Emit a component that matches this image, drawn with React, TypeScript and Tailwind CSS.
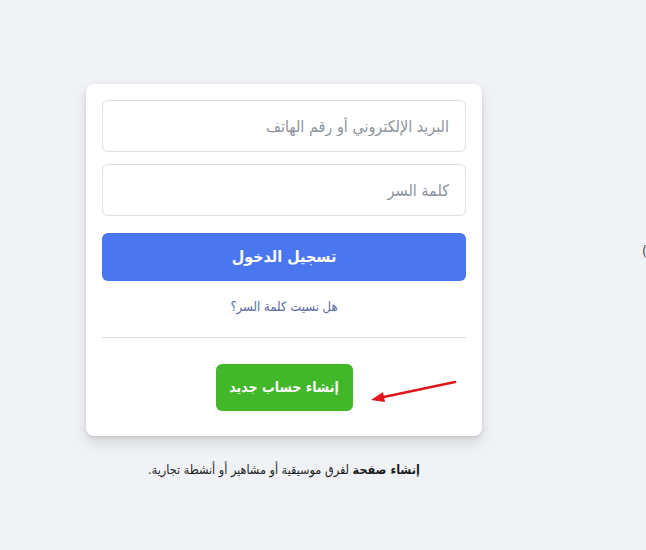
export default function App() {
  return (
    <div
      dir="ltr"
      className="min-h-[550px] w-full bg-[#f0f2f5] pt-[84px]"
      style={{ fontFamily: '"DejaVu Sans Condensed", "DejaVu Sans", sans-serif' }}
    >
      <div className="flex">
        <div className="ml-[86px] w-[396px]">
          <div className="relative rounded-lg bg-white px-4 pt-4 pb-[25px] shadow-[0_2px_4px_rgba(0,0,0,0.1),0_8px_16px_rgba(0,0,0,0.1)]">
            <form dir="rtl" className="flex flex-col">
              <input
                type="text"
                placeholder="البريد الإلكتروني أو رقم الهاتف"
                className="h-[52px] w-full rounded-md border border-[#dddfe2] px-4 text-[16px] text-[#1d2129] placeholder:text-[#8d949e] focus:outline-none"
              />
              <input
                type="password"
                placeholder="كلمة السر"
                className="mt-3 h-[52px] w-full rounded-md border border-[#dddfe2] px-4 text-[16px] text-[#1d2129] placeholder:text-[#8d949e] focus:outline-none"
              />
              <button
                type="button"
                className="mt-[17px] h-12 w-full rounded-md bg-[#4a76ef] text-[16px] font-bold text-white"
              >
                تسجيل الدخول
              </button>
              <a className="mt-4 block text-center text-[13px] text-[#5a6c9f]">هل نسيت كلمة السر؟</a>
              <div className="mt-5 border-t border-[#dadde1]" />
              <div className="flex justify-center pt-[26px]">
                <button
                  type="button"
                  className="h-[47px] w-[137px] rounded-md bg-[#42b72a] text-[14px] font-bold text-white"
                >
                  إنشاء حساب جديد
                </button>
              </div>
            </form>
            <svg
              className="absolute left-[283px] top-[294px]"
              width="90"
              height="26"
              viewBox="0 0 90 26"
            >
              <line x1="86" y1="4" x2="10" y2="20" stroke="#e0161c" strokeWidth="2.5" strokeLinecap="round" />
              <polygon points="2,22 14,14 16,24" fill="#e0161c" />
            </svg>
          </div>
          <p dir="rtl" className="mt-[25px] text-center text-[12.5px] text-[#1c1e21]">
            <span className="font-bold">إنشاء صفحة</span> لفرق موسيقية أو مشاهير أو أنشطة تجارية.
          </p>
        </div>
        <div className="ml-auto mt-[160px] text-[14px] leading-none text-[#444]">
          <span className="-mr-[1px] inline-block">(</span>
        </div>
      </div>
    </div>
  );
}
